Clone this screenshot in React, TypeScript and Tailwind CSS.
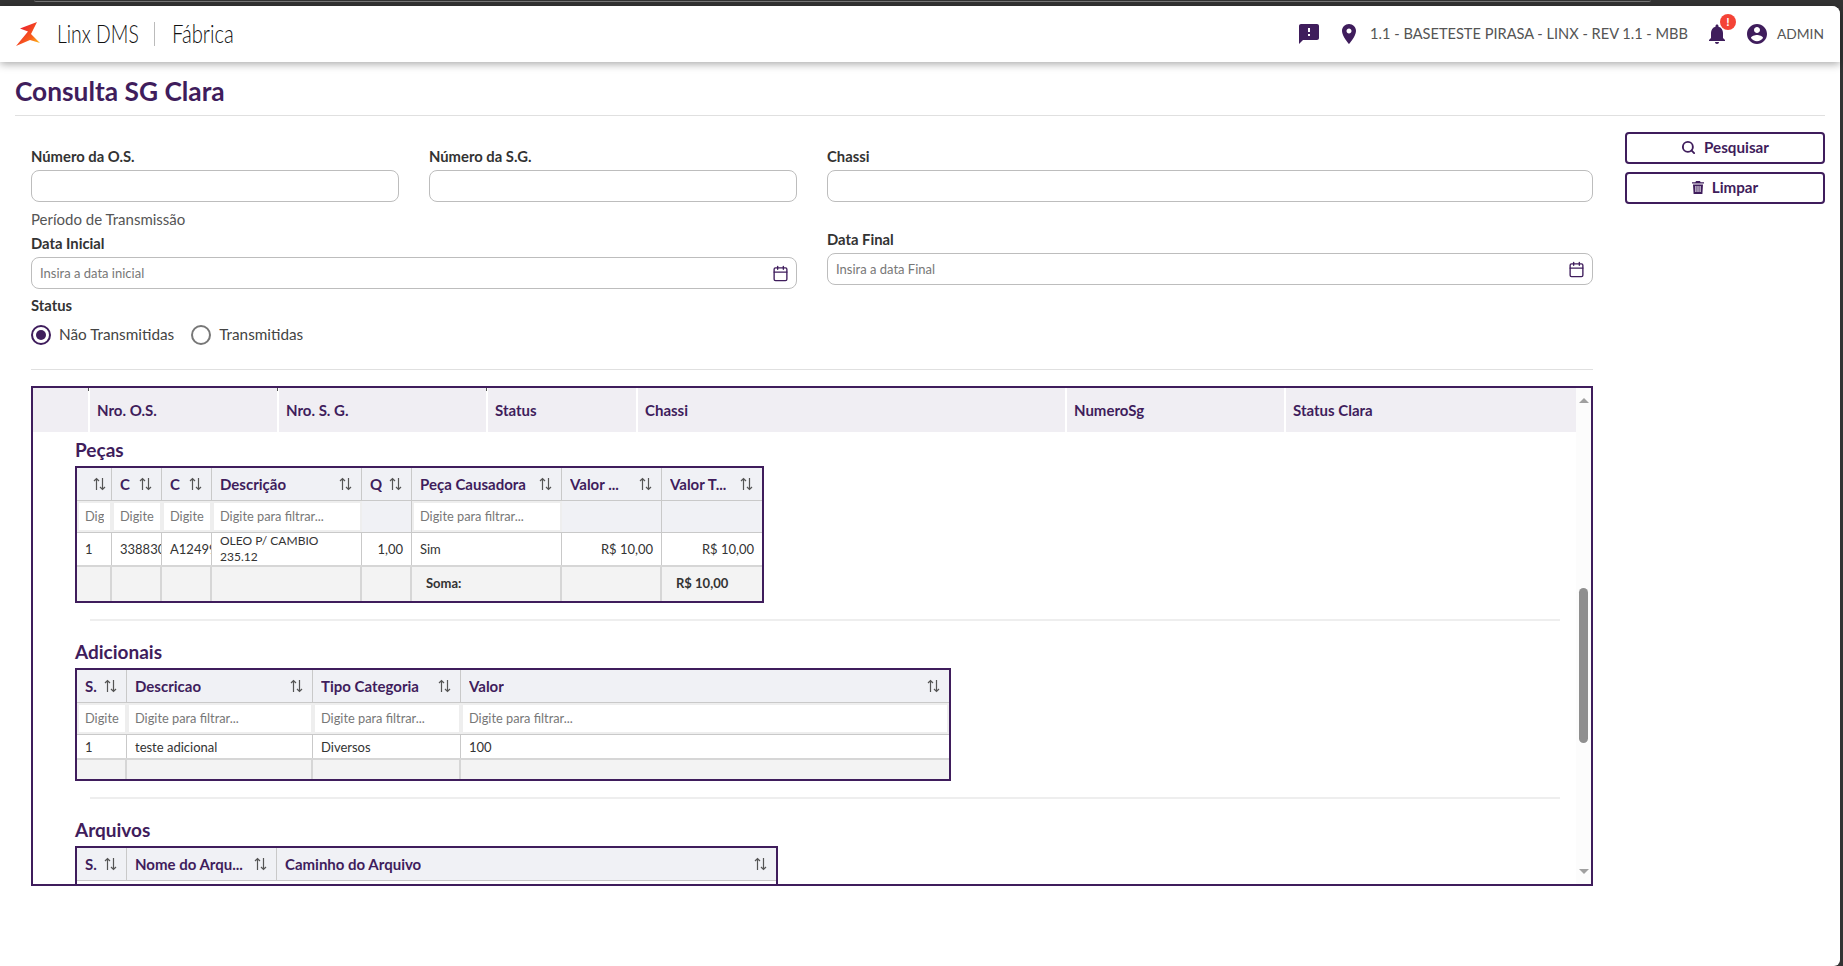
import { Search, Calendar } from 'lucide-react'

const ink = 'text-[#3f1d5c]'
const font = "font-['Lato','Open_Sans',sans-serif]"

function SortIcon() {
  return (
    <svg width="13" height="14" viewBox="0 0 13 14" fill="none" stroke="#555" strokeWidth="1.2" className="shrink-0">
      <path d="M3.5 13V1.5M1 4l2.5-2.5L6 4" />
      <path d="M9.5 1v11.5M7 10l2.5 2.5L12 10" />
    </svg>
  )
}

function Logo() {
  return (
    <svg width="24" height="24" viewBox="0 0 24 24" className="shrink-0">
      <defs>
        <linearGradient id="lx" x1="0.25" y1="0.3" x2="0.95" y2="0.95">
          <stop offset="0" stopColor="#ec2a2a" />
          <stop offset="0.55" stopColor="#f9601c" />
          <stop offset="1" stopColor="#fcc419" />
        </linearGradient>
      </defs>
      <path d="M21 0 L4 6.5 L12 9.5 L0 24 L14 18 L24 21 L15 12 Z" fill="url(#lx)" />
    </svg>
  )
}

function Field({ label, placeholder, icon, className }: { label: string; placeholder?: string; icon?: boolean; className?: string }) {
  return (
    <div className={className}>
      <div className="h-[26px] text-[14.8px] font-bold leading-[24px] text-[#333]">{label}</div>
      <div className="flex h-[32px] items-center justify-between rounded-[8px] border border-[#bdbdbd] pl-[8px] pr-[7px] text-[13px] text-[#777]">
        <span className="pt-[2px]">{placeholder}</span>
        {icon && <Calendar className={`h-[17px] w-[17px] ${ink}`} strokeWidth={1.9} />}
      </div>
    </div>
  )
}

function Head({ label }: { label: string }) {
  return (
    <div className="flex h-full items-center justify-between overflow-hidden border-r border-[#c9c9c9] pl-[8px] pr-[9px] text-[15px] font-bold text-[#3f1d5c] last:border-r-0">
      <span className="truncate">{label}</span>
      <span className="ml-[4px]"><SortIcon /></span>
    </div>
  )
}

function Filter({ text }: { text?: string }) {
  if (!text) return <div className="h-full border-r border-[#c9c9c9] bg-[#f0f1f5] last:border-r-0" />
  return (
    <div className="flex h-full items-center border-2 border-[#eeeeee] bg-white px-[6px] text-[12.8px] text-[#777]">
      <span className="overflow-hidden whitespace-nowrap">{text}</span>
    </div>
  )
}

function Cell({ text, right, small }: { text?: string; right?: boolean; small?: boolean }) {
  return (
    <div className={`flex h-full items-center overflow-hidden whitespace-pre-line border-r border-[#c9c9c9] pl-[8px] pr-[8px] leading-[16px] text-[#333] last:border-r-0 ${small ? 'text-[12px]' : 'text-[13px]'} ${right ? 'justify-end' : ''}`}>
      {text}
    </div>
  )
}

function Foot({ text, bold }: { text?: string; bold?: boolean }) {
  return (
    <div className={`flex h-full items-center border-r-2 border-[#d6d6d6] pl-[14px] text-[13px] last:border-r-0 ${bold ? 'font-bold' : ''} text-[#333]`}>
      {text}
    </div>
  )
}

function Section({ title, className, children }: { title: string; className?: string; children: React.ReactNode }) {
  return (
    <div className={className}>
      <div className={`h-[24px] text-[19px] font-bold leading-[24px] ${ink}`}>{title}</div>
      {children}
    </div>
  )
}

export default function App() {
  return (
    <div className={`h-[966px] w-[1843px] overflow-hidden bg-[#333] ${font}`}>
      <div className="h-[6px] pl-[34px] pr-[192px]">
        <div className="h-[2px] rounded-b-[2px] border-b border-[#777]" />
      </div>
      <div className="mr-[3px] h-[960px] rounded-tr-[8px] rounded-br-[6px] bg-white">
        {/* Header */}
        <header className="relative z-10 flex h-[56px] items-center rounded-tr-[8px] bg-white pl-[16px] pr-[16px] shadow-[0_2px_8px_rgba(0,0,0,0.35)]">
          <Logo />
          <span className="ml-[17px] w-[81px] origin-left scale-x-[0.775] whitespace-nowrap text-[25px] font-light text-[#111]">Linx DMS</span>
          <span className="ml-[16px] h-[24px] w-[1px] bg-[#bbb]" />
          <span className="ml-[17px] w-[61px] origin-left scale-x-[0.81] whitespace-nowrap text-[25px] font-light text-[#111]">Fábrica</span>
          <div className="ml-auto flex items-center">
            <svg width="24" height="24" viewBox="0 0 24 24" fill="#3f1d5c"><path d="M20 2H4c-1.1 0-1.99.9-1.99 2L2 22l4-4h14c1.1 0 2-.9 2-2V4c0-1.1-.9-2-2-2zm-7 12h-2v-2h2v2zm0-4h-2V6h2v4z" /></svg>
            <svg className="ml-[16px]" width="24" height="24" viewBox="0 0 24 24" fill="#3f1d5c"><path d="M12 2C8.13 2 5 5.13 5 9c0 5.25 7 13 7 13s7-7.75 7-13c0-3.87-3.13-7-7-7zm0 9.5c-1.38 0-2.5-1.12-2.5-2.5s1.12-2.5 2.5-2.5 2.5 1.12 2.5 2.5-1.12 2.5-2.5 2.5z" /></svg>
            <span className="ml-[9px] text-[14.6px] text-[#555]">1.1 - BASETESTE PIRASA - LINX - REV 1.1 - MBB</span>
            <span className="relative ml-[17px]">
              <svg width="24" height="24" viewBox="0 0 24 24" fill="#3f1d5c" className="block"><path d="M12 22c1.1 0 2-.9 2-2h-4c0 1.1.89 2 2 2zm6-6v-5c0-3.07-1.64-5.64-4.5-6.32V4c0-.83-.67-1.5-1.5-1.5s-1.5.67-1.5 1.5v.68C7.63 5.36 6 7.92 6 11v5l-2 2v1h16v-1l-2-2z" /></svg>
              <span className="absolute -right-[7px] -top-[8px] flex h-[16px] w-[16px] items-center justify-center rounded-full bg-[#f44336] text-[12px] font-bold leading-none text-white">!</span>
            </span>
            <svg className="ml-[16px]" width="24" height="24" viewBox="0 0 24 24" fill="#3f1d5c"><path d="M12 2C6.48 2 2 6.48 2 12s4.48 10 10 10 10-4.48 10-10S17.52 2 12 2zm0 3c1.66 0 3 1.34 3 3s-1.34 3-3 3-3-1.34-3-3 1.34-3 3-3zm0 14.2c-2.5 0-4.71-1.28-6-3.22.03-1.99 4-3.08 6-3.08 1.99 0 5.97 1.09 6 3.08-1.29 1.94-3.5 3.22-6 3.22z" /></svg>
            <span className="ml-[8px] text-[13.8px] text-[#555]">ADMIN</span>
          </div>
        </header>

        {/* Title */}
        <div className="mx-[15px] h-[54px] border-b border-[#e0e0e0] pt-[14px]">
          <h1 className={`text-[26.3px] font-bold leading-[30px] ${ink}`}>Consulta SG Clara</h1>
        </div>

        <div className="flex pl-[31px] pr-[15px]">
          {/* Form + result */}
          <div className="w-[1562px]">
            <div className="mt-[28px] grid grid-cols-[368px_368px_766px] gap-x-[30px]">
              <Field label="Número da O.S." />
              <Field label="Número da S.G." />
              <Field label="Chassi" />
            </div>
            <div className="grid grid-cols-[766px_766px] gap-x-[30px]">
              <div>
                <div className="mt-[7px] h-[22px] text-[15px] leading-[20px] text-[#555]">Período de Transmissão</div>
                <Field label="Data Inicial" placeholder="Insira a data inicial" icon />
              </div>
              <Field label="Data Final" placeholder="Insira a data Final" icon className="mt-[25px]" />
            </div>
            <div className="mt-[5px] h-[24px] text-[14.8px] font-bold leading-[22px] text-[#333]">Status</div>
            <div className="mt-[7px] flex h-[20px] items-center text-[15.3px] text-[#444]">
              <span className="flex h-[20px] w-[20px] items-center justify-center rounded-full border-2 border-[#3f1d5c]">
                <span className="h-[10px] w-[10px] rounded-full bg-[#3f1d5c]" />
              </span>
              <span className="ml-[8px] pb-[2px]">Não Transmitidas</span>
              <span className="ml-[17px] h-[20px] w-[20px] rounded-full border-2 border-[#777]" />
              <span className="ml-[8px] pb-[2px]">Transmitidas</span>
            </div>
            <div className="mt-[24px] h-[1px] bg-[#e0e0e0]" />

            {/* Result box */}
            <div className="mt-[16px] flex h-[500px] overflow-hidden border-2 border-[#3f1d5c]">
              <div className="h-full min-w-0 flex-1 overflow-hidden">
                <div className={`grid h-[44px] grid-cols-[55px_189px_209px_150px_429px_219px_292px] items-center bg-[#f0eef3] text-[15px] font-bold ${ink}`}>
                  <div />
                  {['Nro. O.S.', 'Nro. S. G.', 'Status', 'Chassi', 'NumeroSg', 'Status Clara'].map((h, i) => (
                    <div key={h} className="relative flex h-full items-center border-l-2 border-white pl-[7px]">
                      {i < 3 && <span className="absolute -left-[2px] top-0 h-[3px] w-[1px] bg-[#555]" />}
                      {h}
                    </div>
                  ))}
                </div>

                <Section title="Peças" className="ml-[42px] mt-[6px]">
                  <div className="mt-[4px] w-[689px] border-2 border-[#3f1d5c]">
                    <div className="grid h-[32px] grid-cols-[35px_50px_50px_150px_50px_150px_100px_100px] bg-[#f0f1f5]">
                      <div className="flex items-center justify-end border-r border-[#c9c9c9] pr-[5px]"><SortIcon /></div>
                      <Head label="C" /><Head label="C" /><Head label="Descrição" /><Head label="Q" /><Head label="Peça Causadora" /><Head label="Valor ..." /><Head label="Valor T..." />
                    </div>
                    <div className="grid h-[32px] grid-cols-[35px_50px_50px_150px_50px_150px_100px_100px] border-t border-[#c9c9c9]">
                      <Filter text="Digite" /><Filter text="Digite" /><Filter text="Digite" /><Filter text="Digite para filtrar..." /><Filter /><Filter text="Digite para filtrar..." /><Filter /><Filter />
                    </div>
                    <div className="grid h-[33px] grid-cols-[35px_50px_50px_150px_50px_150px_100px_100px] border-t border-[#c9c9c9]">
                      <Cell text="1" /><Cell text="338830" /><Cell text="A12499" /><Cell small text={'OLEO P/ CAMBIO\n235.12'} /><Cell text="1,00" right /><Cell text="Sim" /><Cell text="R$ 10,00" right /><Cell text="R$ 10,00" right />
                    </div>
                    <div className="grid h-[36px] grid-cols-[35px_50px_50px_150px_50px_150px_100px_100px] border-t-2 border-[#d6d6d6] bg-[#f3f3f3]">
                      <Foot /><Foot /><Foot /><Foot /><Foot /><Foot text="Soma:" bold /><Foot /><Foot text="R$ 10,00" bold />
                    </div>
                  </div>
                </Section>

                <div className="ml-[57px] mr-[16px] mt-[16px] h-[2px] bg-[#eeeeee]" />

                <Section title="Adicionais" className="ml-[42px] mt-[19px]">
                  <div className="mt-[4px] w-[876px] border-2 border-[#3f1d5c]">
                    <div className="grid h-[32px] grid-cols-[50px_186px_148px_488px] bg-[#f0f1f5]">
                      <Head label="S." /><Head label="Descricao" /><Head label="Tipo Categoria" /><Head label="Valor" />
                    </div>
                    <div className="grid h-[32px] grid-cols-[50px_186px_148px_488px] border-t border-[#c9c9c9]">
                      <Filter text="Digite" /><Filter text="Digite para filtrar..." /><Filter text="Digite para filtrar..." /><Filter text="Digite para filtrar..." />
                    </div>
                    <div className="grid h-[24px] grid-cols-[50px_186px_148px_488px] border-t border-[#c9c9c9]">
                      <Cell text="1" /><Cell text="teste adicional" /><Cell text="Diversos" /><Cell text="100" />
                    </div>
                    <div className="grid h-[21px] grid-cols-[50px_186px_148px_488px] border-t-2 border-[#d6d6d6] bg-[#f3f3f3]">
                      <Foot /><Foot /><Foot /><Foot />
                    </div>
                  </div>
                </Section>

                <div className="ml-[57px] mr-[16px] mt-[16px] h-[2px] bg-[#eeeeee]" />

                <Section title="Arquivos" className="ml-[42px] mt-[19px]">
                  <div className="mt-[4px] w-[703px] border-2 border-[#3f1d5c]">
                    <div className="grid h-[32px] grid-cols-[50px_150px_499px] bg-[#f0f1f5]">
                      <Head label="S." /><Head label="Nome do Arqu..." /><Head label="Caminho do Arquivo" />
                    </div>
                    <div className="h-[40px] border-t border-[#c9c9c9]" />
                  </div>
                </Section>
              </div>

              {/* Scrollbar */}
              <div className="flex h-full w-[15px] shrink-0 flex-col items-center bg-[#fcfcfc]">
                <span className="mt-[10px] h-0 w-0 border-x-[5px] border-b-[5px] border-x-transparent border-b-[#a0a0a0]" />
                <span className="mt-[185px] h-[155px] w-[9px] rounded-[5px] bg-[#8f8f8f]" />
                <span className="mt-[126px] h-0 w-0 border-x-[5px] border-t-[5px] border-x-transparent border-t-[#a0a0a0]" />
              </div>
            </div>
          </div>

          {/* Buttons */}
          <div className="ml-[32px] mt-[16px] flex w-[200px] flex-col gap-[8px]">
            <button className={`flex h-[32px] items-center justify-center gap-[8px] rounded-[4px] border-2 border-[#3f1d5c] pb-[2px] text-[15.2px] font-bold ${ink}`}>
              <Search className="h-[15px] w-[15px]" strokeWidth={3} />
              Pesquisar
            </button>
            <button className={`flex h-[32px] items-center justify-center gap-[8px] rounded-[4px] border-2 border-[#3f1d5c] pb-[2px] text-[15.2px] font-bold ${ink}`}>
              <svg width="12" height="13" viewBox="0 0 12 13" fill="#3f1d5c"><path d="M4 0h4l.6 1.2H12v1.4H0V1.2h3.4zM1 3.4h10l-.6 9.6H1.6zM3.4 5v6h1V5zm2.1 0v6h1V5zm2.1 0v6h1V5z" fillRule="evenodd" /></svg>
              Limpar
            </button>
          </div>
        </div>
      </div>
    </div>
  )
}
